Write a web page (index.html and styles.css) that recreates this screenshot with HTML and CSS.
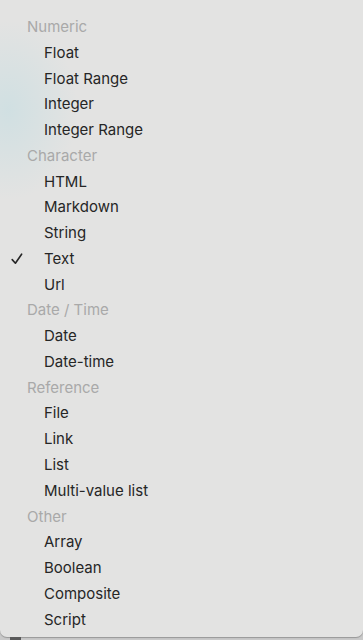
FILE: index.html
```html
<!DOCTYPE html>
<html lang="en">
<head>
    <meta charset="UTF-8">
    <meta name="viewport" content="width=device-width, initial-scale=1.0">
    <title>Field type menu</title>
    <link rel="stylesheet" href="styles.css">
</head>
<body>
    <div class="menu">
        <div class="menu-header">Numeric</div>
        <div class="menu-item">Float</div>
        <div class="menu-item">Float Range</div>
        <div class="menu-item">Integer</div>
        <div class="menu-item">Integer Range</div>
        <div class="menu-header">Character</div>
        <div class="menu-item">HTML</div>
        <div class="menu-item">Markdown</div>
        <div class="menu-item">String</div>
        <div class="menu-item checked">
            <svg class="check" width="12" height="12" viewBox="0 0 12 12"><path d="M1.2 6.6 L4.4 10.2 L10.6 1.2" fill="none" stroke="#262626" stroke-width="1.6" stroke-linecap="round" stroke-linejoin="round"/></svg>Text
        </div>
        <div class="menu-item">Url</div>
        <div class="menu-header">Date / Time</div>
        <div class="menu-item">Date</div>
        <div class="menu-item">Date-time</div>
        <div class="menu-header">Reference</div>
        <div class="menu-item">File</div>
        <div class="menu-item">Link</div>
        <div class="menu-item">List</div>
        <div class="menu-item">Multi-value list</div>
        <div class="menu-header">Other</div>
        <div class="menu-item">Array</div>
        <div class="menu-item">Boolean</div>
        <div class="menu-item">Composite</div>
        <div class="menu-item">Script</div>
    </div>
    <div class="under"><span class="under-tab"></span></div>
</body>
</html>
```

FILE: styles.css
```css
body {
    margin: 0;
    padding: 0;
    height: 640px;
    overflow: hidden;
    background-color: #c9c9c9;
    font-family: Inter, "Noto Sans", sans-serif;
}

.menu {
    height: 637px;
    box-sizing: border-box;
    padding-top: 14px;
    background-color: #e3e3e2;
    background-image: radial-gradient(ellipse 70px 90px at 8px 110px, rgba(200, 222, 226, 0.7), rgba(200, 222, 226, 0));
    border-radius: 0 0 7px 7px;
    box-shadow: 0 0.5px 1px rgba(0, 0, 0, 0.25);
}

.menu-header,
.menu-item {
    height: 25.78px;
    line-height: 25.78px;
    font-size: 15px;
    white-space: nowrap;
}

.menu-header {
    padding-left: 27px;
    color: #a9a9a9;
}

.menu-item {
    padding-left: 44px;
    color: #262626;
    position: relative;
}

.check {
    position: absolute;
    left: 11px;
    top: 7px;
}

.under {
    height: 3px;
    position: relative;
}

.under-tab {
    position: absolute;
    left: 10px;
    top: 0;
    width: 11px;
    height: 3px;
    background-color: #5a5a5a;
}
```
